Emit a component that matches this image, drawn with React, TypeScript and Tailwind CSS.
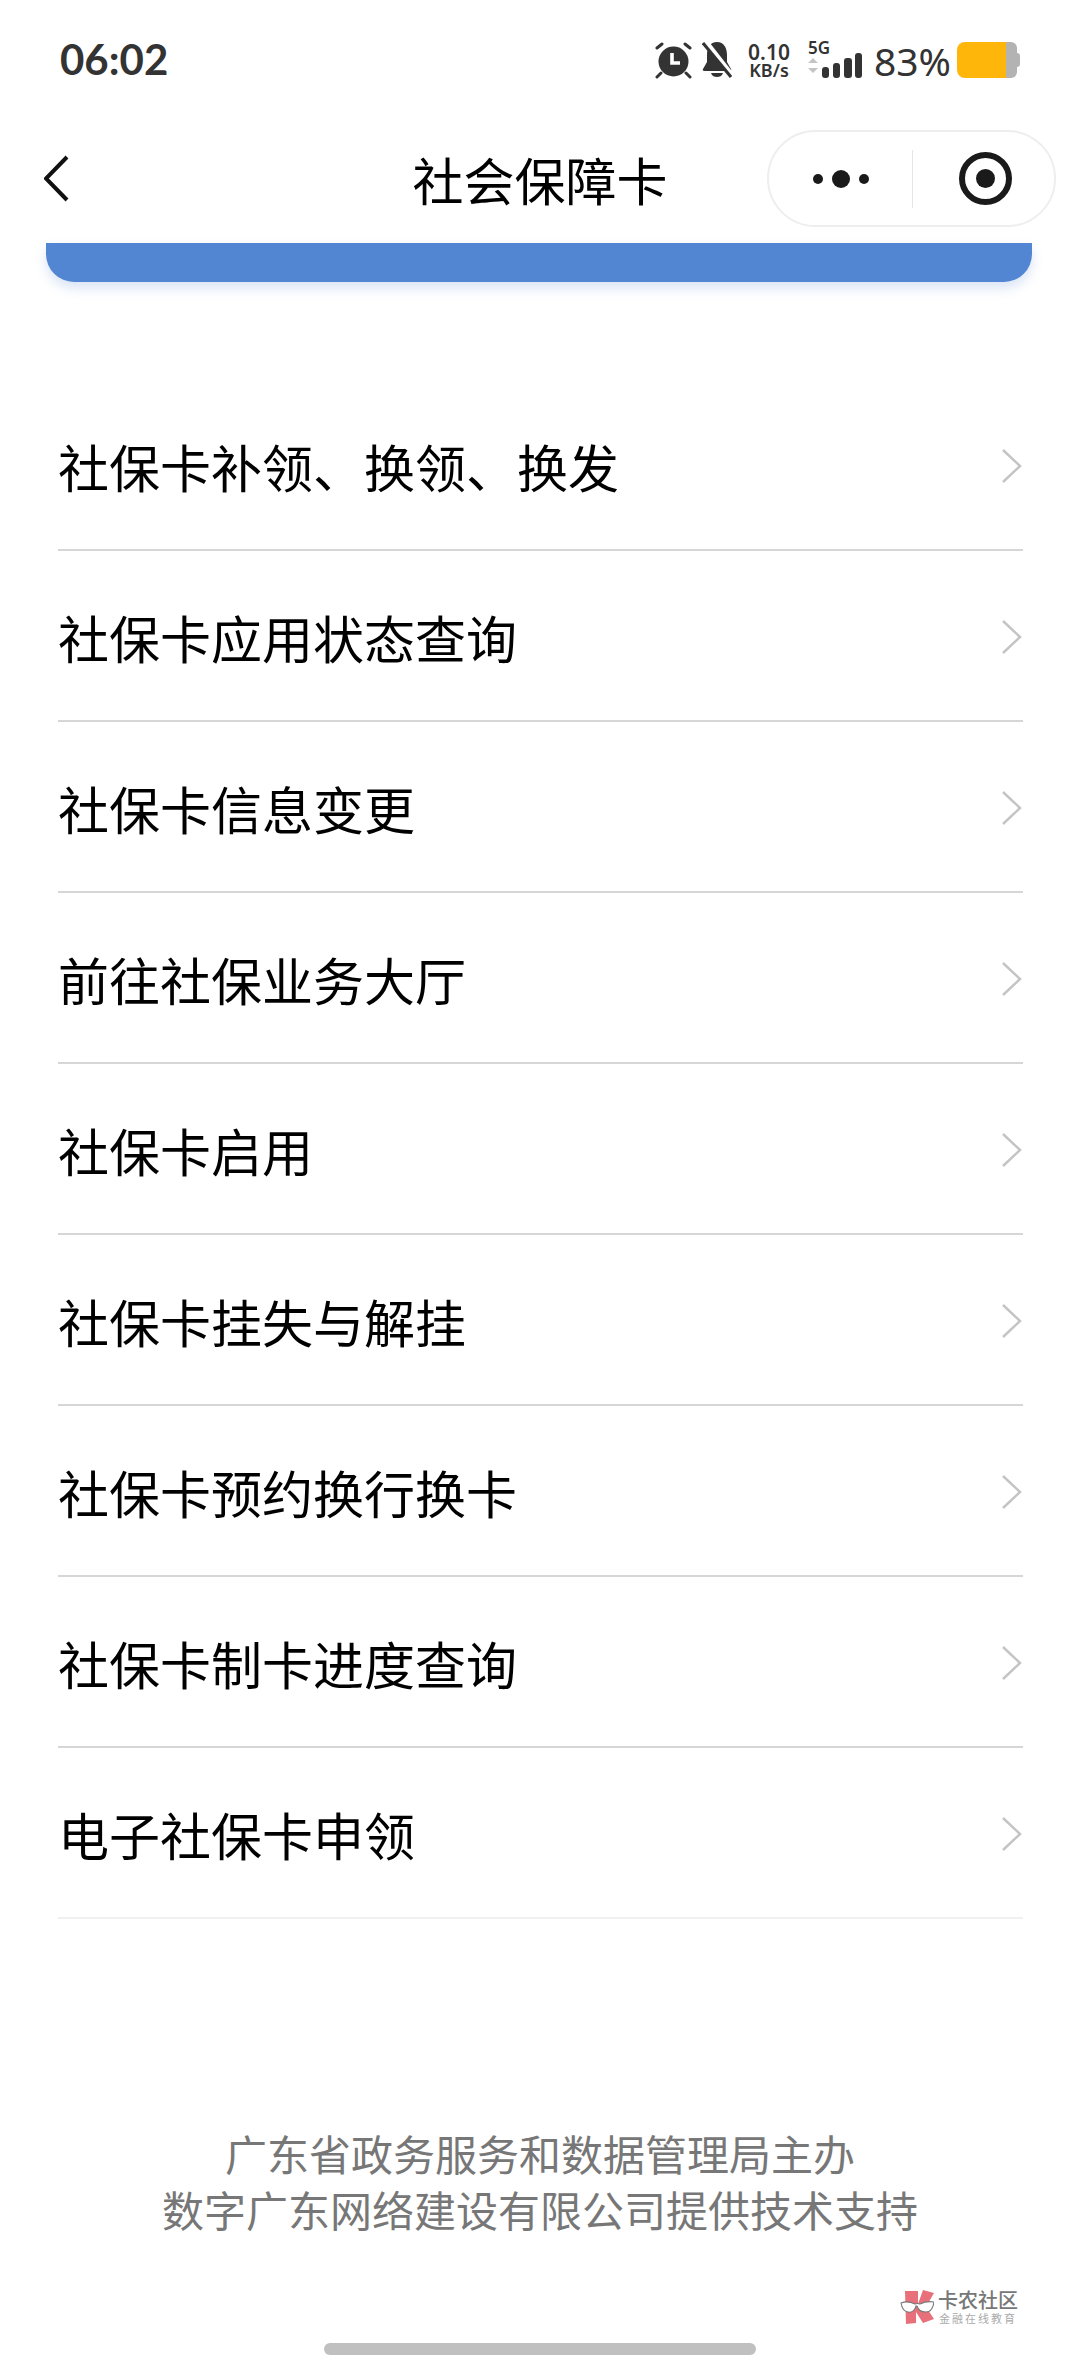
const rows = ['社保卡补领、换领、换发','社保卡应用状态查询','社保卡信息变更','前往社保业务大厅','社保卡启用','社保卡挂失与解挂','社保卡预约换行换卡','社保卡制卡进度查询','电子社保卡申领'];
const CJK = "font-['Noto_Sans_CJK_SC','Noto_Sans',sans-serif]";

function Alarm() {
  return (
    <svg width="37" height="37" viewBox="0 0 37 37" fill="none">
      <circle cx="18.500" cy="19.500" r="15" fill="#333" />
      <path d="M17 11v10h8" stroke="#fff" strokeWidth="3.600" fill="none" />
      <path d="M2 6l5-4M35 6l-5-4M6 31l-4 4M31 31l4 4" stroke="#333" strokeWidth="3" strokeLinecap="round" />
    </svg>
  );
}
function BellOff() {
  return (
    <svg width="30" height="36" viewBox="0 0 30 36" fill="none">
      <path d="M15 0C8 0 5 6 5 13v7l-4 7c-.7 1.200 0 2 1.500 2h25c1.500 0 2.200-.8 1.500-2l-4-7v-7C25 6 22 0 15 0z" fill="#333" />
      <path d="M9 31h12c-1 3-3.500 4-6 4s-5-1-6-4z" fill="#333" />
      <path d="M4 0l25 32" stroke="#fff" strokeWidth="5" />
      <path d="M1 1l28 34" stroke="#333" strokeWidth="3" />
    </svg>
  );
}
function Signal() {
  return (
    <svg width="54" height="25" viewBox="0 0 54 25">
      <path d="M0 10l5-5 5 5zM0 15l5 5 5-5z" fill="#c4c4c4" />
      <rect x="14" y="14" width="7" height="11" rx="3" fill="#333" />
      <rect x="25" y="10" width="7" height="15" rx="3" fill="#333" />
      <rect x="36" y="5" width="8" height="20" rx="3" fill="#333" />
      <rect x="47" y="0" width="7" height="25" rx="3" fill="#333" />
    </svg>
  );
}
function Battery() {
  return (
    <svg width="63" height="36" viewBox="0 0 63 36">
      <path d="M49 0h5a6 6 0 0 1 6 6v24a6 6 0 0 1-6 6h-5z" fill="#b3b3b3" />
      <path d="M60 11h0a3 3 0 0 1 3 3v8a3 3 0 0 1-3 3h0z" fill="#b3b3b3" />
      <path d="M8 0h41v36H8a8 8 0 0 1-8-8V8a8 8 0 0 1 8-8z" fill="#ffb60a" />
    </svg>
  );
}
function Logo() {
  return (
    <svg width="34" height="34" viewBox="0 0 34 34">
      <path d="M5 1h13v13L23 0l11 3-8 14 8 12-11 4-7-11v11l-10 1z" fill="#e8707a" />
      <path d="M1 13c5-2 10-1 14 1 2-.7 3-.7 5 0 4-2 9-3 14-2-1 7-4 10-8 10-5 0-8-2-9-6h-1c-1 4-4 7-8 6-3-.5-6-3-7-9z" fill="#fff" stroke="#777" strokeWidth="1.100" />
    </svg>
  );
}

export default function App() {
  return (
    <div className={`relative w-[1080px] h-[2376px] bg-white overflow-hidden ${CJK}`}>
      <div className="h-[120px] pl-[60px] pr-[60px] flex items-center justify-between">
        <span className="font-['Lato',sans-serif] font-bold text-[42px] leading-none text-[#333] -mt-[3px]">06:02</span>
        <div className="flex items-center font-['Noto_Sans',sans-serif] text-[#333]">
          <Alarm />
          <div className="ml-[10px]"><BellOff /></div>
          <div className="ml-[16px] w-[42px] flex flex-col items-center font-semibold">
            <span className="text-[21px] leading-[20px] whitespace-nowrap">0.10</span>
            <span className="text-[18px] leading-[17px] whitespace-nowrap">KB/s</span>
          </div>
          <div className="ml-[18px] w-[54px] flex flex-col items-start font-semibold">
            <span className="text-[17px] leading-[11px]">5G</span>
            <Signal />
          </div>
          <span className="ml-[12px] w-[73px] text-[39px] leading-none whitespace-nowrap">83%</span>
          <div className="ml-[10px]"><Battery /></div>
        </div>
      </div>

      <div className="relative h-[123px] flex items-center justify-center">
        <svg className="absolute left-[44px] top-[35px]" width="26" height="48" viewBox="0 0 26 48" fill="none">
          <path d="M23 2L2 23.500 23 45" stroke="#111" strokeWidth="4" />
        </svg>
        <span className="text-[51px] leading-none text-[#000000] -mt-[5px]">社会保障卡</span>
        <div className="absolute left-[767px] top-[10px] w-[289px] h-[97px] rounded-full border-2 border-[#eeeeee] flex items-center">
          <div className="w-[143px] flex items-center justify-center gap-[9px]">
            <span className="w-[10px] h-[10px] rounded-full bg-[#1a1a1a]" />
            <span className="w-[18px] h-[18px] rounded-full bg-[#1a1a1a]" />
            <span className="w-[10px] h-[10px] rounded-full bg-[#1a1a1a]" />
          </div>
          <div className="w-[1px] h-[58px] bg-[#e6e6e6]" />
          <div className="flex-1 flex items-center justify-center pl-[3px]">
            <div className="w-[53px] h-[53px] rounded-full border-[6px] border-[#1a1a1a] flex items-center justify-center">
              <span className="w-[19px] h-[19px] rounded-full bg-[#1a1a1a]" />
            </div>
          </div>
        </div>
      </div>

      <div className="mx-[46px] w-[986px] h-[39px] rounded-b-[28px] bg-[#5286d2] shadow-[0_6px_12px_rgba(82,134,210,0.22)]" />

      <div className="mt-[98px] ml-[58px] w-[965px]">
        {rows.map((t, i) => (
          <div key={t} className={`h-[171px] flex items-center justify-between border-b-2 ${i === 8 ? 'border-[#f0f0f0]' : 'border-[#d6d6d6]'}`}>
            <span className="text-[51px] leading-none text-[#000000] mt-[3px]">{t}</span>
            <svg className="mr-[1px] mt-[2px]" width="20" height="34" viewBox="0 0 20 34" fill="none">
              <path d="M1 1l17 16L1 33" stroke="#c4c4c4" strokeWidth="2.500" />
            </svg>
          </div>
        ))}
      </div>

      <div className="mt-[206px] flex flex-col items-center text-[42px] leading-[56px] text-[#777777]">
        <span>广东省政务服务和数据管理局主办</span>
        <span>数字广东网络建设有限公司提供技术支持</span>
      </div>

      <div className="absolute left-[900px] top-[2289px] flex items-center gap-[4px]">
        <Logo />
        <div className="flex flex-col">
          <span className="text-[20px] leading-[22px] font-medium text-[#777777]">卡农社区</span>
          <span className="text-[11px] leading-[14px] text-[#aaaaaa] tracking-[2px] ml-[1px]">金融在线教育</span>
        </div>
      </div>
      <div className="absolute left-[324px] top-[2343px] w-[432px] h-[12px] rounded-full bg-[#c0c0c0]" />
    </div>
  );
}
